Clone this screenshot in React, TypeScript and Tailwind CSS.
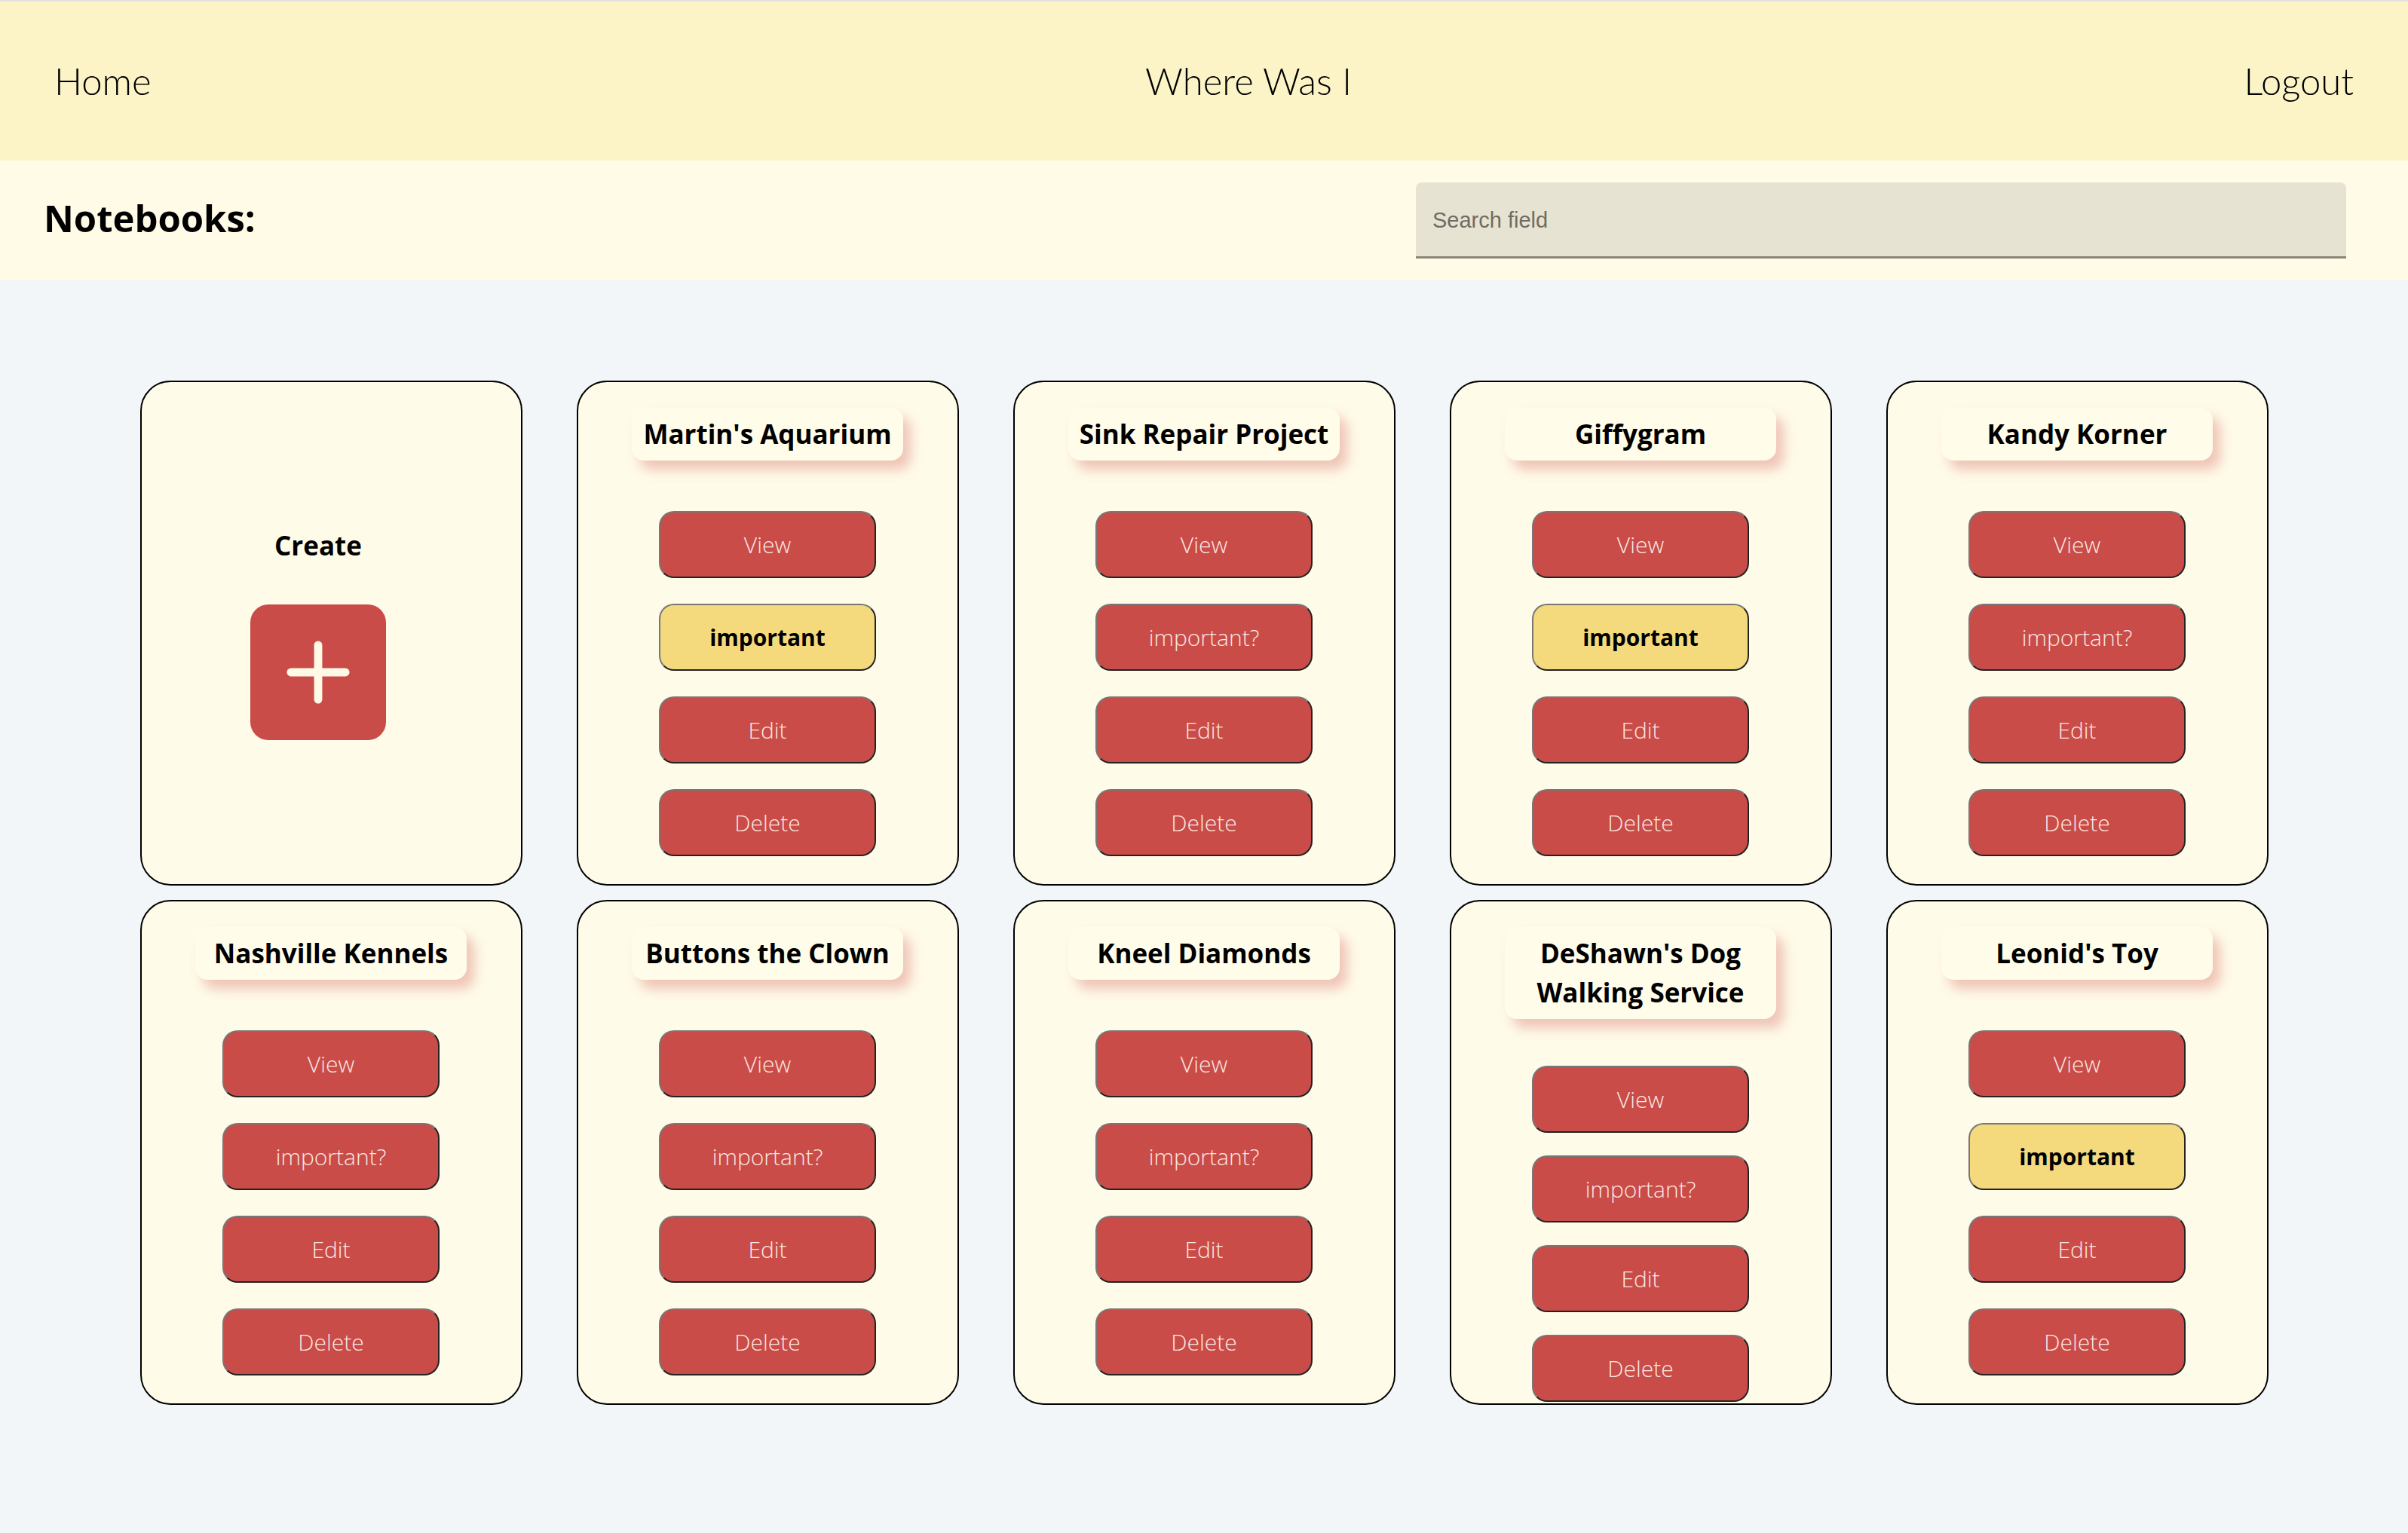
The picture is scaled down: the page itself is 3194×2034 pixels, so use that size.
import { Plus } from "lucide-react";

type Notebook = {
  id: number;
  title: string;
  important: boolean;
  compact?: boolean;
};

const NOTEBOOKS: Notebook[] = [
  { id: 1, title: "Martin's Aquarium", important: true },
  { id: 2, title: "Sink Repair Project", important: false },
  { id: 3, title: "Giffygram", important: true },
  { id: 4, title: "Kandy Korner", important: false },
  { id: 5, title: "Nashville Kennels", important: false },
  { id: 6, title: "Buttons the Clown", important: false },
  { id: 7, title: "Kneel Diamonds", important: false },
  { id: 8, title: "DeShawn's Dog Walking Service", important: false, compact: true },
  { id: 9, title: "Leonid's Toy", important: true },
];

const btnBase =
  "flex h-[89px] w-[288px] items-center justify-center rounded-[20px] border-2 border-t-[#777] border-l-[#777] border-b-[#222] border-r-[#222] text-[30px]";
const redBtn = `${btnBase} bg-[#c94c48] font-light text-[#fbe8e1]`;
const yellowBtn = `${btnBase} bg-[#f4da7c] font-bold text-black`;

function CreateCard() {
  return (
    <div className="flex h-[670px] flex-col items-center justify-center rounded-[40px] border-2 border-black bg-[#fffbe9] pr-[34px]">
      <h2 className="text-[35px] leading-[52px] font-bold text-black">Create</h2>
      <button className="mt-[52px] flex h-[180px] w-[180px] items-center justify-center rounded-[24px] bg-[#c94c48]">
        <Plus className="size-[124px] text-[#fff9e6]" strokeWidth={2.1} />
      </button>
    </div>
  );
}

function NotebookCard({ notebook }: { notebook: Notebook }) {
  // the two-line title squeezes the buttons a little so Delete still fits
  const gap = notebook.compact ? "mt-[62px] gap-[30px]" : "mt-[67px] gap-[34px]";
  return (
    <div className="flex h-[670px] flex-col items-center overflow-hidden rounded-[40px] border-2 border-black bg-[#fffbe9] pt-[34px]">
      <h2 className="w-[360px] rounded-[16px] bg-[#fffcea] px-[4px] py-[9px] text-center text-[35px] leading-[52px] font-bold text-black shadow-[10px_12px_16px_rgba(205,80,75,0.32)]">
        {notebook.title}
      </h2>
      <div className={`flex flex-col ${gap}`}>
        <button className={redBtn}>View</button>
        {notebook.important ? (
          <button className={yellowBtn}>important</button>
        ) : (
          <button className={redBtn}>important?</button>
        )}
        <button className={redBtn}>Edit</button>
        <button className={redBtn}>Delete</button>
      </div>
    </div>
  );
}

export default function App() {
  return (
    <div className="min-h-screen border-t-2 border-[#e2e2e2] bg-[#f2f6f9] font-['Open_Sans',sans-serif]">
      <nav className="grid h-[211px] grid-cols-[1fr_auto_1fr] items-center bg-[#fcf4c7] px-[72px] font-['Lato',sans-serif] text-[49px] font-light text-black">
        <a className="justify-self-start">Home</a>
        <a className="pl-[118px]">Where Was I</a>
        <a className="justify-self-end">Logout</a>
      </nav>

      <div className="flex h-[159px] items-center bg-[#fffbe7] pl-[58px] pr-[82px]">
        <h1 className="mb-[8px] text-[49px] leading-[60px] font-bold text-black">Notebooks:</h1>
        <input
          placeholder="Search field"
          className="ml-auto h-[101px] w-[1234px] rounded-t-[8px] border-b-[3px] border-[#8a877a] bg-[#e7e3d2] px-[22px] pt-[2px] font-['Liberation_Sans',Arial,sans-serif] text-[29px] text-[#555] outline-none placeholder:text-[#6f6c63]"
        />
      </div>

      <main className="grid grid-cols-[repeat(5,507px)] justify-center gap-x-[72px] gap-y-[19px] pt-[133px] pb-[170px]">
        <CreateCard />
        {NOTEBOOKS.map((n) => (
          <NotebookCard key={n.id} notebook={n} />
        ))}
      </main>
    </div>
  );
}
